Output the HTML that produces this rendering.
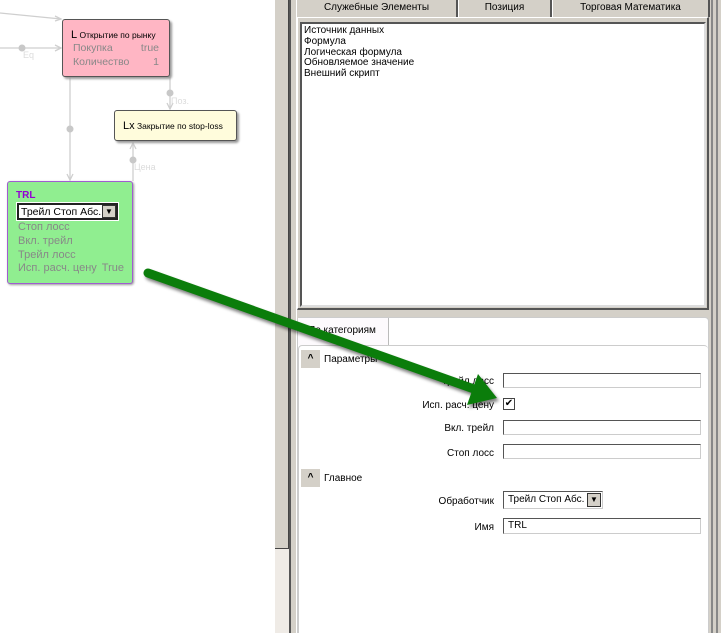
<!DOCTYPE html>
<html><head><meta charset="utf-8"><style>
*{margin:0;padding:0;box-sizing:border-box}
body{width:721px;height:633px;position:relative;overflow:hidden;background:#fff;font-family:"Liberation Sans",sans-serif;font-size:10.5px;color:#000}
.a{position:absolute;white-space:nowrap}
</style></head><body>
<div class="a" style="left:0;top:0;width:275px;height:633px;background:#fff"></div>
<svg class="a" style="left:0;top:0" width="275" height="633">
<g stroke="#cfcfcf" stroke-width="1.3" fill="none">
<line x1="0" y1="13" x2="61" y2="19"/><polyline points="55,16 61,19 55,21"/>
<line x1="0" y1="48" x2="61" y2="48"/><polyline points="55,45 61,48 55,51"/>
<line x1="70" y1="77" x2="70" y2="180"/><polyline points="67,174 70,180 73,174"/>
<line x1="170" y1="77" x2="170" y2="109"/><polyline points="167,103 170,109 173,103"/>
<line x1="133" y1="143" x2="133" y2="181"/><polyline points="130,149 133,143 136,149"/>
</g>
<g fill="#c8c8c8"><circle cx="22" cy="48" r="3.5"/><circle cx="70" cy="129" r="3.5"/><circle cx="170" cy="93" r="3.5"/><circle cx="133" cy="160" r="3.5"/></g>
<g fill="#dcdcdc" font-size="9" font-family="Liberation Sans,sans-serif"><text x="23" y="58">Eq</text><text x="171" y="104">Поз.</text><text x="134" y="170">Цена</text></g>
</svg>
<div class="a" style="left:62px;top:19px;width:108px;height:58px;background:#ffb6c4;border:1px solid #555;border-radius:3px;box-shadow:2px 2px 2px #999">
 <div class="a" style="left:8px;top:9px;font-size:8.5px"><span style="font-size:11px">L</span> Открытие по рынку</div>
 <div class="a" style="left:10px;top:22px;color:#888">Покупка</div><div class="a" style="right:10px;top:22px;color:#888">true</div>
 <div class="a" style="left:10px;top:36px;color:#888">Количество</div><div class="a" style="right:10px;top:36px;color:#888">1</div>
</div>
<div class="a" style="left:114px;top:110px;width:123px;height:31px;background:#fffcdc;border:1px solid #555;border-radius:3px;box-shadow:2px 2px 2px #999">
 <div class="a" style="left:8px;top:9px;font-size:8.5px"><span style="font-size:11px">Lx</span> Закрытие по stop-loss</div>
</div>
<div class="a" style="left:7px;top:181px;width:126px;height:103px;background:#90ee90;border:1px solid #a05cd0;border-radius:3px;box-shadow:1px 1px 2px #999">
 <div class="a" style="left:8px;top:8px;color:#9400d3;font-weight:bold;font-size:10px">TRL</div>
 <div class="a" style="left:9px;top:21px;width:101px;height:17px;background:#fff;border:2px solid #222;outline:1px solid #fff"><span class="a" style="left:2px;top:1px;font-size:10.5px">Трейл Стоп Абс.</span><span class="a" style="right:0;top:0;width:14px;height:13px;background:#d4d0c8;border:1px solid #333;font-size:8px;text-align:center;line-height:12px">▼</span></div>
 <div class="a" style="left:10px;top:39px;color:#888;font-size:11px">Стоп лосс</div>
 <div class="a" style="left:10px;top:53px;color:#888;font-size:11px">Вкл. трейл</div>
 <div class="a" style="left:10px;top:67px;color:#888;font-size:11px">Трейл лосс</div>
 <div class="a" style="left:10px;top:80px;color:#888;font-size:11px">Исп. расч. цену</div><div class="a" style="right:8px;top:80px;color:#888;font-size:11px">True</div>
</div>
<div class="a" style="left:275px;top:0;width:14px;height:633px;background:#efebe6"></div>
<div class="a" style="left:275px;top:0;width:14px;height:549px;background:#d4d0c8;border-bottom:1px solid #444;border-right:1px solid #444"></div>
<div class="a" style="left:289px;top:0;width:2px;height:633px;background:#555"></div>
<div class="a" style="left:291px;top:0;width:5px;height:633px;background:#d4d0c8"></div>
<div class="a" style="left:296px;top:0;width:1px;height:633px;background:#fff"></div>
<div class="a" style="left:297px;top:0;width:424px;height:633px;background:#d4d0c8"></div>
<div class="a" style="left:297px;top:0;width:161px;height:17px;border-right:2px solid #555;text-align:center;line-height:16px;font-size:10px">Служебные Элементы</div>
<div class="a" style="left:458px;top:0;width:94px;height:17px;border-left:1px solid #fff;border-right:2px solid #555;text-align:center;line-height:16px;font-size:10px">Позиция</div>
<div class="a" style="left:552px;top:0;width:158px;height:17px;border-left:1px solid #fff;border-right:2px solid #555;text-align:center;line-height:16px;font-size:10px">Торговая Математика</div>
<div class="a" style="left:297px;top:17px;width:412px;height:293px;border-left:1px solid #fff;border-top:1px solid #fff;border-right:2px solid #555;border-bottom:2px solid #555"></div>
<div class="a" style="left:300px;top:22px;width:406px;height:285px;background:#fff;border:2px solid #555;border-right-color:#ddd;border-bottom-color:#ddd;font-size:10px;line-height:10.8px;padding:2px 2px">Источник данных<br>Формула<br>Логическая формула<br>Обновляемое значение<br>Внешний скрипт</div>
<div class="a" style="left:711px;top:0;width:2px;height:633px;background:#888"></div>
<div class="a" style="left:716px;top:0;width:2px;height:633px;background:#888"></div>
<div class="a" style="left:297px;top:317px;width:412px;height:316px;background:#fff;border:1px solid #ccc;border-radius:4px 4px 0 0"></div>
<div class="a" style="left:298px;top:318px;width:91px;height:27px;border-right:1px solid #bbb;background:#fdfafd;font-size:10px;padding:7px 0 0 10px">По категориям</div>
<div class="a" style="left:298px;top:345px;width:410px;height:288px;border-top:1px solid #ccc;border-left:1px solid #ccc;border-radius:4px 4px 0 0;background:#fff"></div>
<div class="a" style="left:301px;top:350px;width:19px;height:18px;background:#d4d0c8;text-align:center;font-size:10px;line-height:18px;font-weight:bold">^</div>
<div class="a" style="left:324px;top:354px;font-size:10px">Параметры</div>
<div class="a" style="left:301px;top:469px;width:19px;height:18px;background:#d4d0c8;text-align:center;font-size:10px;line-height:18px;font-weight:bold">^</div>
<div class="a" style="left:324px;top:473px;font-size:10px">Главное</div>
<div class="a" style="right:227px;top:376px;font-size:10px">Трейл лосс</div>
<div class="a" style="left:503px;top:373px;width:198px;height:15px;border:1px solid #555;border-right-color:#ccc;border-bottom-color:#ccc"></div>
<div class="a" style="right:227px;top:400px;font-size:10px">Исп. расч. цену</div>
<div class="a" style="left:503px;top:398px;width:12px;height:12px;border:1px solid #444;font-size:10px;line-height:10px;text-align:center">✔</div>
<div class="a" style="right:227px;top:423px;font-size:10px">Вкл. трейл</div>
<div class="a" style="left:503px;top:420px;width:198px;height:15px;border:1px solid #555;border-right-color:#ccc;border-bottom-color:#ccc"></div>
<div class="a" style="right:227px;top:448px;font-size:10px">Стоп лосс</div>
<div class="a" style="left:503px;top:444px;width:198px;height:15px;border:1px solid #555;border-right-color:#ccc;border-bottom-color:#ccc"></div>
<div class="a" style="right:227px;top:496px;font-size:10px">Обработчик</div>
<div class="a" style="left:503px;top:491px;width:100px;height:18px;border:1px solid #555;border-right-color:#ccc;border-bottom-color:#ccc;font-size:10px;padding:2px 0 0 4px">Трейл Стоп Абс.<span class="a" style="right:1px;top:1px;width:14px;height:14px;background:#d4d0c8;border:1px solid #333;font-size:8px;text-align:center;line-height:12px">▼</span></div>
<div class="a" style="right:227px;top:522px;font-size:10px">Имя</div>
<div class="a" style="left:503px;top:518px;width:198px;height:16px;border:1px solid #555;border-right-color:#ccc;border-bottom-color:#ccc;font-size:10px;padding:1px 0 0 4px">TRL</div>
<svg class="a" style="left:0;top:0" width="721" height="633">
<defs><filter id="s"><feGaussianBlur stdDeviation="1.5"/></filter></defs>
<g transform="translate(2,3)" filter="url(#s)" opacity="0.5"><line x1="148" y1="273" x2="474" y2="389" stroke="#000" stroke-width="9" stroke-linecap="round"/><polygon points="497,398 467,405 478,374" fill="#000"/></g>
<line x1="148" y1="273" x2="474" y2="389" stroke="#0b7d0b" stroke-width="9" stroke-linecap="round"/>
<polygon points="497,398 467,405 478,374" fill="#0b7d0b"/>
</svg>
</body></html>
